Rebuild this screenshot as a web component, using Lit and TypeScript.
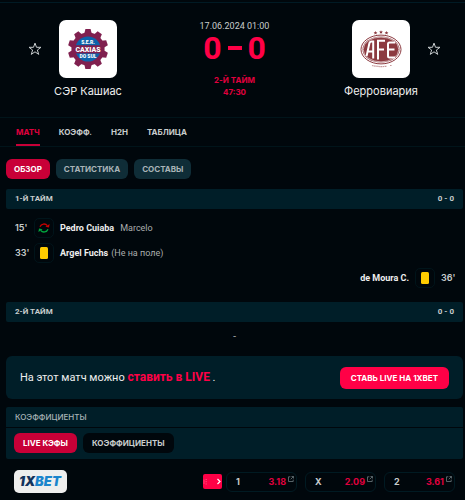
import { LitElement, html, css, svg, nothing } from "lit";
import { customElement, property, state } from "lit/decorators.js";
import { classMap } from "lit/directives/class-map.js";

interface MatchEvent {
  time: string;
  icon: "sub" | "card";
  name: string;
  note: string;
  wide?: boolean;
  away?: boolean;
}

const FIRST_HALF: MatchEvent[] = [
  { time: "15'", icon: "sub", name: "Pedro Cuiaba", note: "Marcelo", wide: true },
  { time: "33'", icon: "card", name: "Argel Fuchs", note: "(Не на поле)" },
  { time: "36'", icon: "card", name: "de Moura C.", note: "", away: true },
];

const ODDS = [
  { label: "1", value: "3.18" },
  { label: "X", value: "2.09" },
  { label: "2", value: "3.61" },
];

const starIcon = html`<svg width="14" height="14" viewBox="0 0 14 14" fill="none" stroke="#c8cdcf" stroke-width="1" aria-hidden="true">
  <path d="M7 1.1 8.5 5.3H13L9.4 8 10.7 12.4 7 9.8 3.3 12.4 4.6 8 1 5.3H5.5Z" />
</svg>`;

const gearTeeth = Array.from({ length: 10 }, (_, i) => i * 36);

const caxiasCrest = html`<svg width="58" height="58" viewBox="0 0 58 58" role="img" aria-label="Caxias">
  <g fill="#80204f">
    <circle cx="29" cy="29" r="16.6" />
    ${gearTeeth.map(
      (a) => svg`<path d="M25.2 14 26.4 9h5.2l1.2 5z" transform="rotate(${a} 29 29)" />`
    )}
  </g>
  <circle cx="29" cy="29" r="12.6" fill="#0c64ac" />
  <rect x="16" y="25.2" width="26" height="8.2" fill="#80204f" />
  <g fill="#fff" font-family="Roboto, sans-serif" font-weight="900" text-anchor="middle">
    <text x="29" y="23.6" font-size="5">S.E.R.</text>
    <text x="29" y="32.2" font-size="7">CAXIAS</text>
    <text x="29" y="38.4" font-size="5">DO SUL</text>
  </g>
</svg>`;

const afeCrest = html`<svg width="58" height="58" viewBox="0 0 58 58" role="img" aria-label="AFE">
  <g fill="#8c3a40">
    <path d="m23.5 11 .6 1.2 1.3.1-1 .9.3 1.3-1.2-.7-1.2.7.3-1.3-1-.9 1.3-.1zM29 10.3l.6 1.2 1.3.1-1 .9.3 1.3-1.2-.7-1.2.7.3-1.3-1-.9 1.3-.1zM34.5 11l.6 1.2 1.3.1-1 .9.3 1.3-1.2-.7-1.2.7.3-1.3-1-.9 1.3-.1z" />
    <ellipse cx="29" cy="29.5" rx="18.5" ry="13" />
  </g>
  <ellipse cx="29" cy="29.5" rx="20" ry="14.4" fill="none" stroke="#8c3a40" stroke-width="1" />
  <ellipse cx="29" cy="29.5" rx="17.8" ry="12.4" fill="none" stroke="#fff" stroke-width=".6" />
  <g fill="none" stroke="#fff" stroke-width="2">
    <path d="M14.6 36 17.5 22.8q.6-1.4 2-1.4h1.7V38.5M16 31.5h5" />
    <path d="M26 39.5V20.8H33M26 29.5h6" />
    <path d="M43 22.4h-5.5q-1.5 0-1.5 1.5v12q0 1.5 1.5 1.5H43M36 29.5h6.5" />
  </g>
  <path d="M20 45.5q8 1.7 15 .7M38 45.5h2" fill="none" stroke="#c79a9d" stroke-width="1.2" stroke-dasharray="1.6 .5" />
</svg>`;

const subIcon = html`<svg width="12" height="12" viewBox="0 0 12 12" fill="none" stroke-width="1.3" aria-label="Замена" role="img">
  <path d="M2 4.7A4.2 4.2 0 0 1 9.3 3.7" stroke="#c80000" />
  <path d="M11.6 1.9 11 5.6 7.4 4.7Z" fill="#c80000" />
  <path d="M10 7.3A4.2 4.2 0 0 1 2.7 8.3" stroke="#00a83f" />
  <path d="M.4 10.1 1 6.4 4.6 7.3Z" fill="#00a83f" />
</svg>`;

const cardIcon = html`<svg width="8" height="12" viewBox="0 0 8 12" role="img" aria-label="Жёлтая карточка">
  <rect width="8" height="12" rx="1.5" fill="#ffcd00" />
</svg>`;

const linkIcon = html`<svg width="6" height="6" viewBox="0 0 6 6" fill="none" stroke="#6d7a7f" stroke-width=".8" aria-hidden="true">
  <path d="M2.4.8H.5V5.5H5.2V3.6M3.5.5H5.5V2.5M5.4.6 2.7 3.3" />
</svg>`;

@customElement("team-card")
class TeamCard extends LitElement {
  @property() name = "";
  @property({ attribute: false }) crest: unknown = nothing;
  static styles = css`
    :host {
      display: flex;
      flex-direction: column;
      align-items: center;
      gap: 6px;
    }
    .crest {
      display: flex;
      border-radius: 7px;
      background: #fff;
      overflow: hidden;
    }
    .name {
      color: #eee;
      font-size: 11px;
      line-height: 14px;
      white-space: nowrap;
      text-decoration: none;
    }
  `;
  render() {
    return html`<div class="crest">${this.crest}</div>
      <a class="name" href="#">${this.name}</a>`;
  }
}

@customElement("event-row")
class EventRow extends LitElement {
  @property({ attribute: false }) event!: MatchEvent;
  static styles = css`
    :host {
      display: block;
    }
    .row {
      display: flex;
      align-items: center;
      gap: 6px;
      padding: 0 9px;
      font-family: Roboto, "Liberation Sans", sans-serif;
      font-size: 9px;
      line-height: 20px;
      color: #c8cdcd;
    }
    .away {
      flex-direction: row-reverse;
    }
    .time {
      width: 13px;
      font-family: Inter, "Liberation Sans", sans-serif;
      font-weight: 600;
      white-space: nowrap;
    }
    .icon {
      display: flex;
      align-items: center;
      justify-content: center;
      width: 18px;
      height: 18px;
      border: 1px solid #00141a;
      border-radius: 5px;
    }
    .name {
      font-weight: 700;
      color: #eee;
      text-decoration: none;
    }
    .note {
      margin-left: -3px;
      color: #a9adad;
    }
    .wide {
      margin-left: 0;
    }
  `;
  render() {
    const e = this.event;
    return html`<div class=${classMap({ row: true, away: !!e.away })}>
      <span class="time">${e.time}</span>
      <span class="icon">${e.icon === "sub" ? subIcon : cardIcon}</span>
      <a class="name" href="#">${e.name}</a>
      ${e.note ? html`<span class=${classMap({ note: true, wide: !!e.wide })}>${e.note}</span>` : nothing}
    </div>`;
  }
}

@customElement("app-root")
class AppRoot extends LitElement {
  @state() private tab = 0;
  @state() private view = 0;
  @state() private oddsView = 0;

  static styles = css`
    :host {
      display: block;
      min-height: 100vh;
      box-sizing: border-box;
      padding-top: 2px;
      overflow: hidden;
      background: #00070c;
      color: #c8cdcd;
      font-family: Inter, "Liberation Sans", sans-serif;
      font-size: 8px;
      line-height: 12px;
    }
    button {
      font: inherit;
      color: inherit;
      border: 0;
      margin: 0;
      padding: 0;
      background: none;
      white-space: nowrap;
    }
    .head {
      display: grid;
      grid-template-columns: 14px 92px 1fr 92px 14px;
      align-items: start;
      padding: 17px 24px 19px 28px;
      border-top: 1px solid #001a24;
      border-bottom: 1px solid #00141a;
    }
    .star {
      display: flex;
      margin-top: 22px;
    }
    .center {
      text-align: center;
    }
    .date {
      font-family: Roboto, "Liberation Sans", sans-serif;
      font-size: 9px;
      color: #c8cdcd;
    }
    .score {
      margin: 0 0 10px;
      font-family: Roboto, "Liberation Sans", sans-serif;
      font-size: 32px;
      line-height: 32px;
      font-weight: 700;
      color: #ff0046;
      display: flex;
      justify-content: center;
      align-items: center;
      gap: 6px;
    }
    .dash {
      width: 14px;
      height: 4px;
      overflow: hidden;
      background: #ff0046;
      color: transparent;
      font-size: 4px;
      line-height: 4px;
    }
    .stage {
      font-weight: 700;
      color: #e0003e;
    }
    .tabs {
      display: flex;
      gap: 19px;
      padding: 0 16px;
      border-bottom: 1px solid #00141a;
    }
    .tab {
      height: 28px;
      padding-top: 1px;
      border-bottom: 2px solid transparent;
      font-weight: 700;
    }
    .tab.on {
      color: #e0003e;
      border-color: #c80037;
    }
    .body {
      padding: 12px 2px 0 6px;
    }
    .pills {
      display: flex;
      gap: 6px;
    }
    .pill {
      height: 20px;
      padding: 0 8px;
      border-radius: 6px;
      background: #0f2d37;
      font-weight: 700;
      color: #a9b4b7;
    }
    .dark .pill {
      padding: 0 9px;
      background: #00070c;
      color: #c8cdcd;
    }
    .pills .pill.on {
      background: #c80037;
      color: #fff;
    }
    .bar {
      display: flex;
      justify-content: space-between;
      padding: 0 9px;
      line-height: 20px;
      border-radius: 2px;
      background: #001e28;
      font-family: Roboto, "Liberation Sans", sans-serif;
      font-weight: 700;
    }
    .first {
      margin-top: 10px;
    }
    .events {
      display: grid;
      gap: 5px;
      padding: 9px 0 14px;
    }
    .none {
      text-align: center;
      line-height: 28px;
    }
    .promo {
      display: flex;
      align-items: center;
      justify-content: space-between;
      margin: 6px 0 8px;
      padding: 10px 14px;
      border-radius: 6px;
      background: #001e28;
      font-family: Roboto, "Liberation Sans", sans-serif;
      font-size: 11px;
      line-height: 22px;
      color: #eee;
    }
    .promo b {
      font-size: 12px;
      color: #ff0046;
    }
    .cta {
      height: 22px;
      padding: 0 11px;
      border-radius: 6px;
      background: #ff0046;
      color: #fff;
      font-family: Inter, "Liberation Sans", sans-serif;
      font-size: 8px;
      font-weight: 700;
    }
    .title {
      border-radius: 2px 2px 0 0;
      font-family: inherit;
      font-weight: 500;
      color: #a9b4b7;
    }
    .dark {
      margin-top: 1px;
      padding: 5px 8px 6px;
      background: #001e28;
      border-radius: 0 0 2px 2px;
    }
    .odds {
      display: flex;
      align-items: center;
      gap: 8px;
      padding: 11px 8px 6px;
    }
    .brand {
      display: flex;
      border-radius: 5px;
      background: #eee;
      margin-right: auto;
    }
    .live {
      display: flex;
      align-items: center;
      justify-content: flex-end;
      width: 19px;
      height: 15px;
      margin-right: -4px;
      border-radius: 2px;
      background: #ff0046;
    }
    .odd {
      display: flex;
      justify-content: space-between;
      box-sizing: border-box;
      width: 71px;
      height: 20px;
      padding: 0 2px 0 9px;
      border: 1px solid #001a22;
      border-radius: 6px;
      font-size: 9px;
      line-height: 18px;
      font-weight: 700;
      text-decoration: none;
      color: #c8cdcd;
    }
    .price {
      display: flex;
      gap: 2px;
      color: #e0003e;
    }
    .price svg {
      margin-top: 3px;
    }
  `;

  private group(items: string[], active: number, pick: (i: number) => void, cls: string) {
    return items.map(
      (t, i) => html`<button class=${classMap({ [cls]: true, on: i === active })} @click=${() => pick(i)}>${t}</button>`
    );
  }

  render() {
    return html`
      <header class="head">
        <button class="star" aria-label="В избранное">${starIcon}</button>
        <team-card name="СЭР Кашиас" .crest=${caxiasCrest}></team-card>
        <div class="center">
          <div class="date">17.06.2024 01:00</div>
          <div class="score"><span>0</span><span class="dash">-</span><span>0</span></div>
          <div class="stage">2-Й ТАЙМ</div>
          <div class="stage">47:30</div>
        </div>
        <team-card name="Ферровиария" .crest=${afeCrest}></team-card>
        <button class="star" aria-label="В избранное">${starIcon}</button>
      </header>
      <nav class="tabs">
        ${this.group(["МАТЧ", "КОЭФФ.", "H2H", "ТАБЛИЦА"], this.tab, (i) => (this.tab = i), "tab")}
      </nav>
      <main class="body">
        <div class="pills">
          ${this.group(["ОБЗОР", "СТАТИСТИКА", "СОСТАВЫ"], this.view, (i) => (this.view = i), "pill")}
        </div>
        <div class="bar first"><span>1-Й ТАЙМ</span><span>0 - 0</span></div>
        <div class="events">${FIRST_HALF.map((e) => html`<event-row .event=${e}></event-row>`)}</div>
        <div class="bar"><span>2-Й ТАЙМ</span><span>0 - 0</span></div>
        <div class="none">-</div>
        <section class="promo">
          <span>На этот матч можно <b>ставить в LIVE</b> .</span>
          <button class="cta">СТАВЬ LIVE НА 1XBET</button>
        </section>
        <div class="bar title">КОЭФФИЦИЕНТЫ</div>
        <div class="pills dark">
          ${this.group(["LIVE КЭФЫ", "КОЭФФИЦИЕНТЫ"], this.oddsView, (i) => (this.oddsView = i), "pill")}
        </div>
        <div class="odds">
          <a class="brand" href="#" aria-label="1XBET">
            <svg width="53" height="23" viewBox="0 0 53 23" font-family="Inter, sans-serif" font-weight="900" font-style="italic" font-size="13">
              <text x="5" y="16" fill="#12325c">1X<tspan fill="#1a84cc">BET</tspan></text>
            </svg>
          </a>
          <button class="live" aria-label="Live">
            <svg width="19" height="15" viewBox="0 0 19 15" fill="none">
              <path d="M1 5.5V10M2.5 5.5H4M2.5 7.7H4M2.5 10H4" stroke="#ff5c88" stroke-width=".7" />
              <path d="M14.5 5 17 7.5 14.5 10" stroke="#fff" stroke-width="1.2" />
            </svg>
          </button>
          ${ODDS.map(
            (o) => html`<a class="odd" href="#"><span>${o.label}</span><span class="price">${o.value}${linkIcon}</span></a>`
          )}
        </div>
      </main>
    `;
  }
}
